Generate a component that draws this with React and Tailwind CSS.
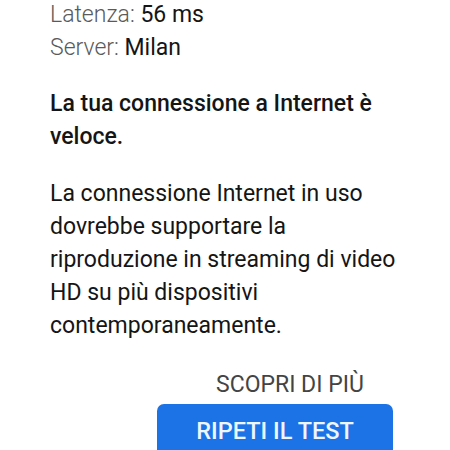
export default function App() {
  return (
    <div
      className="w-[450px] h-[450px] overflow-hidden bg-white text-[23px] leading-[33px] text-[#151515]"
      style={{ fontFamily: 'Roboto, "Liberation Sans", sans-serif' }}
    >
      <div className="-mt-[2px] pl-[50px] pr-[42px]">
        {/* Test details */}
        <div>
          <span className="font-light text-[#5a5a5a]">Latenza: </span>
          <span>56 ms</span>
        </div>
        <div>
          <span className="font-light text-[#5a5a5a]">Server: </span>
          <span>Milan</span>
        </div>

        <p className="mt-[23px] font-medium">
          La tua connessione a Internet è veloce.
        </p>

        <p className="mt-[24px]">
          La connessione Internet in uso dovrebbe supportare la riproduzione in streaming di video HD su più dispositivi contemporaneamente.
        </p>
      </div>

      {/* Actions */}
      <div className="mt-[31px] flex flex-col">
        <button className="ml-[216px] self-start text-[23px] leading-[24px] text-[#444]">
          SCOPRI DI PIÙ
        </button>
        <button className="ml-[157px] mt-[7px] h-[54px] w-[236px] shrink-0 rounded-[7px] bg-[#1b73e6] text-[23.5px] font-medium text-[#eef6ff]">
          RIPETI IL TEST
        </button>
      </div>
    </div>
  )
}
